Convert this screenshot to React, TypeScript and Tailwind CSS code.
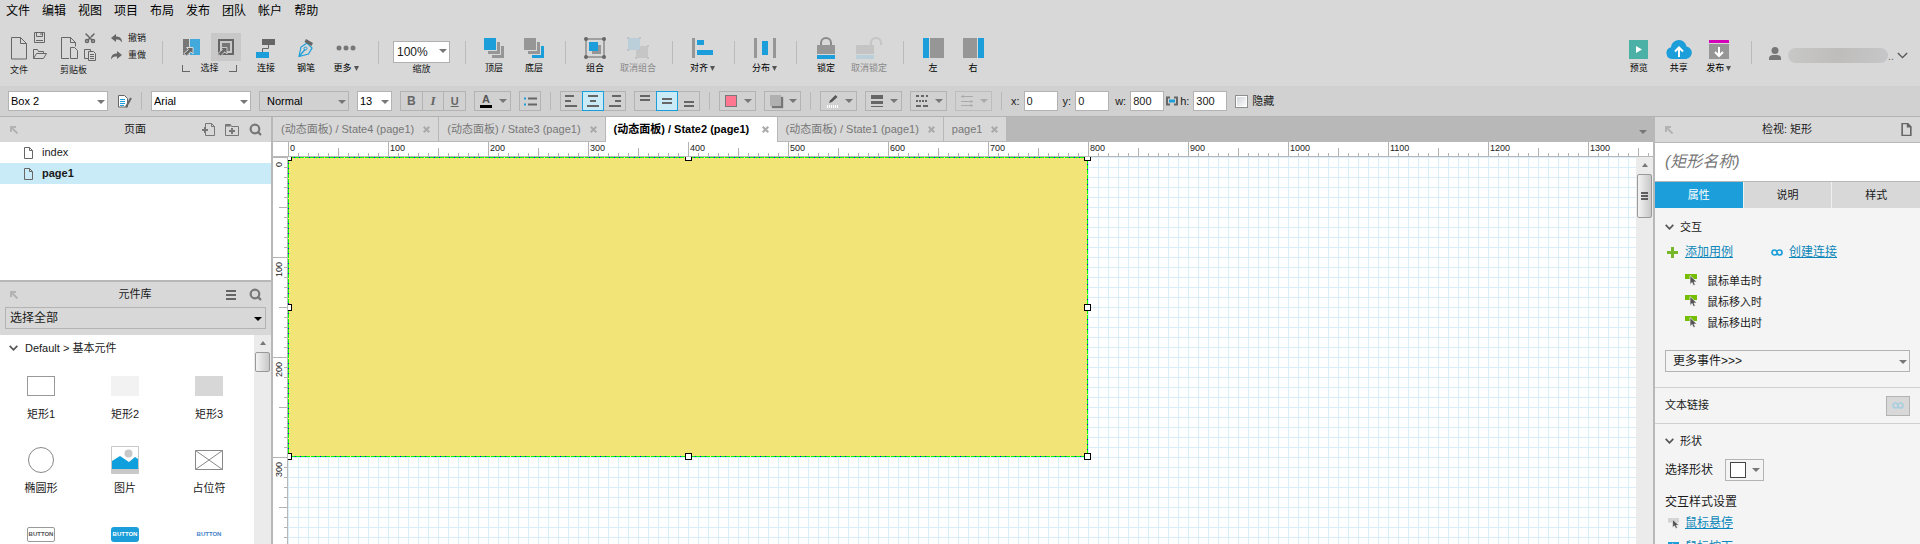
import { useLayoutEffect, useRef, useState } from "react";
import type { ReactNode } from "react";
import { Scissors, Search } from "lucide-react";

const BLUE = "#1b9ed9";

function Caret({ className = "text-[#777]" }: { className?: string }) {
    return (
        <svg width="8" height="4" viewBox="0 0 8 4" className={`shrink-0 ${className}`}>
            <path d="M0 0h8L4 4z" fill="currentColor" />
        </svg>
    );
}

function Chevron({ width = 9 }: { width?: number }) {
    return (
        <svg width={width} height={width === 9 ? 6 : 7} viewBox="0 0 9 6" preserveAspectRatio="none" fill="none" stroke="#555" strokeWidth={width === 9 ? 1.7 : 1.1}>
            <path d="M.7.8l3.8 4L8.3.8" />
        </svg>
    );
}

function ToolSep({ className = "ml-[11px] mr-[9px]" }: { className?: string }) {
    return <div className={`mt-[19px] h-[23px] w-px shrink-0 bg-[#bbb] ${className}`} />;
}

function ToolItem({ label, children, width = "w-10", caret, disabled }: {
    label: string;
    children: ReactNode;
    width?: string;
    caret?: boolean;
    disabled?: boolean;
}) {
    return (
        <button disabled={disabled} className={`mt-[15px] flex shrink-0 flex-col items-center ${width} ${disabled ? "text-[#888]" : "text-black"}`}>
            <span className="flex h-[22px] items-center justify-center">{children}</span>
            <span className="mt-[3px] flex h-3 items-center gap-[2px] whitespace-nowrap text-[9px] leading-3">
                {label}
                {caret && (
                    <svg width="5" height="5" viewBox="0 0 5 5"><path d="M0 0h5L2.5 5z" fill="#555" /></svg>
                )}
            </span>
        </button>
    );
}

function PageIcon({ className, stroke = "#666", sw = 1 }: { className: string; stroke?: string; sw?: number }) {
    return (
        <svg viewBox="0 0 9 12" className={className} fill="none" stroke={stroke} strokeWidth={sw}>
            <path d="M.5.5h5l3 3v8h-8zM5.5.5v3h3" />
        </svg>
    );
}

function Pointer({ halo }: { halo: string }) {
    return <path d="M3.500 9.500h6.500V16l-2.200-2.200L3.500 18 1 15.500l4.500-4z" fill="#666" stroke={halo} strokeWidth="1" />;
}

function Toolbar() {
    return (
        <div className="flex h-16 items-start bg-[#d8d8d8] pl-[10px]">
            <div className="mt-2 flex flex-col">
                <div className="flex h-8">
                    <button aria-label="新建" className="mt-[7px] h-[23px]">
                        <svg width="17" height="23" fill="none" stroke="#666"><path d="M1.500.5h9l6 6v15.500h-15zM10.500.5v6h6" /></svg>
                    </button>
                    <div className="ml-[6px] flex flex-col pt-[2px]">
                        <button aria-label="保存" className="flex h-[17px] items-start">
                            <svg width="13" height="12" fill="none" stroke="#666"><path d="M1.500.5h10v10h-10zM3.500.5v4h6v-4M3 8.500h7M8 1v2" /></svg>
                        </button>
                        <button aria-label="打开" className="flex h-3 items-start">
                            <svg width="14" height="11" fill="none" stroke="#666"><path d="M.5 9.500v-9h4l1 2h5v2M.5 9.500l3-5h10l-3 5z" /></svg>
                        </button>
                    </div>
                </div>
                <span className="mt-[2px] text-[9px] leading-3">文件</span>
            </div>
            <div className="ml-[13px] mt-2 flex flex-col">
                <div className="flex h-8">
                    <button aria-label="粘贴" className="mt-[7px] h-[23px]">
                        <svg width="19" height="23" fill="none" stroke="#666"><path d="M9 21.500H1.500V.5h9l5 5v4M10.500.5v5h5" /><path d="M10.500 10.500h4l3 3v8h-7z" fill="#d8d8d8" /></svg>
                    </button>
                    <div className="ml-[5px] flex flex-col pt-[2px]">
                        <button aria-label="剪切" className="flex h-[17px] items-start"><Scissors size={12} color="#666" strokeWidth={3} className="-rotate-90" /></button>
                        <button aria-label="复制" className="flex h-3 items-start">
                            <svg width="13" height="12" fill="none" stroke="#666"><path d="M4 9.500H.5v-9h6v2" /><path d="M4.500 2.500h5l2 2v7h-7zM6 5.500h4M6 7.500h4M6 9.500h4" /></svg>
                        </button>
                    </div>
                </div>
                <span className="mt-[2px] text-[9px] leading-3">剪贴板</span>
            </div>
            <div className="ml-[14px] mt-[10px] flex flex-col gap-[5px] text-[9px] leading-3">
                <button className="flex items-center gap-[6px]">
                    <svg width="11" height="9"><path d="M0 4l5-4v2.500c4 0 6 2 6 6C9.500 6 8 5.500 5 5.500V8z" fill="#666" /></svg>撤销
                </button>
                <button className="flex items-center gap-[6px]">
                    <svg width="11" height="9"><path d="M11 4L6 0v2.500C2 2.500 0 4.500 0 8.500 1.500 6 3 5.500 6 5.500V8z" fill="#666" /></svg>重做
                </button>
            </div>
            <ToolSep className="ml-4 mr-[19px]" />
            <div className="mt-[11px] w-[59px]">
                <div className="flex h-7 items-center justify-between">
                    <button aria-label="相交选择" className="pl-px">
                        <svg width="17" height="18"><path d="M0 1h6v16H0z" fill="#777" /><path d="M7 1h10v16H7z" fill="#42a9dc" /><Pointer halo="#d8d8d8" /></svg>
                    </button>
                    <button aria-label="包含选择" className="flex h-7 w-[30px] items-center justify-center bg-[#c8c8c8]">
                        <svg width="18" height="18"><path d="M2 2h14v14H2z" fill="none" stroke="#666" strokeWidth="2" /><path d="M5 5h8v8H5z" fill="#777" /><Pointer halo="#c8c8c8" /></svg>
                    </button>
                </div>
                <div className="flex h-3 justify-between pr-1 text-[9px] leading-3">
                    <span className="mt-[4px] h-[7px] w-2 border-b border-l border-[#666]" />
                    <span className="mt-px">选择</span>
                    <span className="mt-[4px] h-[7px] w-2 border-b border-r border-[#666]" />
                </div>
            </div>
            <div className="w-[5px] shrink-0" />
            <ToolItem label="连接">
                <svg width="20" height="20"><path d="M6 1h13v6H6z" fill="#666" /><path d="M0 14h13v6H0z" fill={BLUE} /><path d="M12.500 7v3.500h-6V14" fill="none" stroke="#666" /></svg>
            </ToolItem>
            <ToolItem label="钢笔">
                <svg width="16" height="20"><path d="M1 18.500L3 9l6-4 5 5-3.500 6zM1 18.500l6-7" fill="none" stroke={BLUE} strokeWidth="1.200" /><circle cx="7.500" cy="10.500" r="1.500" fill="none" stroke={BLUE} /><path d="M8 1l7 4-1.500 3L6.500 4z" fill="#666" /></svg>
            </ToolItem>
            <ToolItem label="更多" caret>
                <svg width="20" height="6" fill="#777"><circle cx="3" cy="3" r="2.500" /><circle cx="10" cy="3" r="2.500" /><circle cx="17" cy="3" r="2.500" /></svg>
            </ToolItem>
            <ToolSep className="ml-3 mr-[14px]" />
            <div className="mt-[17px] flex flex-col items-center">
                <div className="relative">
                    <select id="zoom" className="h-[22px] w-[57px] appearance-none border border-[#b0b0b0] bg-white pl-[3px] text-[12px]">
                        <option>100%</option>
                    </select>
                    <Caret className="pointer-events-none absolute right-[3px] top-[10px] text-[#777]" />
                </div>
                <label htmlFor="zoom" className="text-[9px] leading-3">缩放</label>
            </div>
            <ToolSep className="ml-[15px] mr-2" />
            <ToolItem label="顶层">
                <svg width="20" height="20"><path d="M8 8h12v12H8z" fill="#969696" /><path d="M4 4h13v13H4z" fill="#d8d8d8" /><path d="M4 4h12v12H4z" fill="#969696" /><path d="M0 0h13v13H0z" fill="#d8d8d8" /><path d="M0 0h12v12H0z" fill={BLUE} /></svg>
            </ToolItem>
            <ToolItem label="底层">
                <svg width="20" height="20"><path d="M8 8h12v12H8z" fill={BLUE} /><path d="M4 4h13v13H4z" fill="#d8d8d8" /><path d="M4 4h12v12H4z" fill="#969696" /><path d="M0 0h13v13H0z" fill="#d8d8d8" /><path d="M0 0h12v12H0z" fill="#969696" /></svg>
            </ToolItem>
            <ToolSep />
            <ToolItem label="组合">
                <svg width="22" height="22"><path d="M2 2h18v18H2z" fill="none" stroke="#666" /><path d="M8 8h9v9H8z" fill="#969696" /><path d="M5 5h9v9H5z" fill={BLUE} /><g fill="#666"><circle cx="2" cy="2" r="2" /><circle cx="20" cy="2" r="2" /><circle cx="2" cy="20" r="2" /><circle cx="20" cy="20" r="2" /></g></svg>
            </ToolItem>
            <ToolItem label="取消组合" width="w-[46px]" disabled>
                <svg width="22" height="22"><path d="M9 9h12v12H9z" fill="#c6c6c6" /><path d="M1 1h12v12H1z" fill="#bbcfdb" /><g fill="#c2c2c2"><path d="M0 0h2v2H0zM12 0h2v2h-2zM0 12h2v2H0zM12 12h2v2h-2zM20 8h2v2h-2zM8 20h2v2H8zM20 20h2v2h-2z" /></g></svg>
            </ToolItem>
            <ToolSep />
            <ToolItem label="对齐" width="w-[41px]" caret>
                <svg width="22" height="21"><path d="M0 0h3v20H0z" fill="#969696" /><path d="M5 2h7v5H5zM5 12h16v5H5z" fill={BLUE} /></svg>
            </ToolItem>
            <ToolSep />
            <ToolItem label="分布" width="w-[41px]" caret>
                <svg width="22" height="20"><path d="M0 0h3v20H0zM19 0h3v20h-3z" fill="#969696" /><path d="M8 3h6v14H8z" fill={BLUE} /></svg>
            </ToolItem>
            <ToolSep />
            <ToolItem label="锁定">
                <svg width="18" height="22"><path d="M4 9V6a5 5 0 0110 0v3" fill="none" stroke="#8a8a8a" strokeWidth="2" /><path d="M0 8h18v9H0z" fill="#969696" /><path d="M0 18h18v4H0z" fill={BLUE} /></svg>
            </ToolItem>
            <ToolItem label="取消锁定" width="w-[46px]" disabled>
                <svg width="26" height="22"><path d="M15 9V6a5 5 0 0110 0v2" fill="none" stroke="#c4c4c4" strokeWidth="2" /><path d="M0 8h18v9H0z" fill="#c4c4c4" /><path d="M0 18h18v4H0z" fill="#bbcfdb" /></svg>
            </ToolItem>
            <ToolSep />
            <ToolItem label="左">
                <svg width="21" height="20"><path d="M0 0h6v20H0z" fill={BLUE} /><path d="M7 0h14v20H7z" fill="#969696" /></svg>
            </ToolItem>
            <ToolItem label="右">
                <svg width="21" height="20"><path d="M15 0h6v20h-6z" fill={BLUE} /><path d="M0 0h14v20H0z" fill="#969696" /></svg>
            </ToolItem>
            <div className="ml-auto flex items-start pr-3">
                <ToolItem label="预览">
                    <svg width="19" height="19" className="mt-[3px]"><path d="M0 0h19v19H0z" fill="#4bb0a6" /><path d="M7 6v7l6-3.500z" fill="#fff" /></svg>
                </ToolItem>
                <ToolItem label="共享">
                    <svg width="26" height="19" className="mt-[3px]"><path d="M6 19a6 6 0 01-1-11.800C5.500 3 9 0 13 0s7 3 7.500 6.500A6.300 6.300 0 0120 19z" fill={BLUE} /><path d="M13 17V8M9 11.500l4-4 4 4" fill="none" stroke="#fff" strokeWidth="2" /></svg>
                </ToolItem>
                <ToolItem label="发布" caret>
                    <svg width="20" height="19" className="mt-[3px]"><path d="M0 0h20v3H0z" fill="#d400b8" /><path d="M0 4h20v15H0z" fill="#969696" /><path d="M10 7v9M6 12l4 4 4-4" fill="none" stroke="#fff" strokeWidth="2" /></svg>
                </ToolItem>
                <ToolSep className="ml-3 mr-[17px]" />
                <button aria-label="用户" className="mt-[22px] flex items-center">
                    <svg width="12" height="13" fill="#777"><circle cx="6" cy="3.500" r="3.500" /><path d="M0 13v-2c0-2 2-3 4-3h4c2 0 4 1 4 3v2z" /></svg>
                    <span className="ml-[7px] mt-1 h-[15px] w-[100px] rounded-full bg-gradient-to-r from-[#c8c8c8] via-[#bebdbb] to-[#c6c6c8]" />
                    <span className="mr-[3px] mt-1 text-[11px] leading-3 text-[#666]">..</span>
                    <span className="mt-1"><Chevron width={11} /></span>
                </button>
            </div>
        </div>
    );
}

function Pick({ label, value, width, bg = "bg-white", pad = "pl-[2px]" }: { label: string; value: string; width: string; bg?: string; pad?: string }) {
    return (
        <div className={`relative h-5 shrink-0 ${width}`}>
            <select aria-label={label} className={`block h-5 w-full appearance-none border border-[#b3b3b3] text-[11px] leading-[18px] text-black ${bg} ${pad}`}>
                <option>{value}</option>
            </select>
            <Caret className="pointer-events-none absolute right-[3px] top-[9px] text-[#777]" />
        </div>
    );
}

function Sep() {
    return <div className="mx-px h-[18px] w-px shrink-0 bg-[#b8b8b8]" />;
}

function DropButton({ label, children, disabled }: { label: string; children: ReactNode; disabled?: boolean }) {
    return (
        <button aria-label={label} disabled={disabled} className={`flex h-5 w-[37px] shrink-0 items-center justify-between border pl-[5px] pr-[3px] ${disabled ? "border-[#bdbdbd]" : "border-[#b3b3b3]"}`}>
            {children}
            <Caret className={disabled ? "text-[#aaa]" : "text-[#777]"} />
        </button>
    );
}

function Group({ items, active }: { items: { label: string; icon: ReactNode }[]; active?: number }) {
    return (
        <div className="flex h-5 w-[66px] shrink-0 border border-[#b3b3b3]">
            {items.map((item, i) => (
                <button
                    key={item.label}
                    aria-label={item.label}
                    className={`flex flex-1 items-center justify-center text-[#666] ${i === active ? "-my-px h-5 border border-[#1b9ed9] bg-[#c9eaf7]" : "h-[18px]"} ${active === undefined && i > 0 ? "border-l border-[#b3b3b3]" : ""}`}
                >
                    {item.icon}
                </button>
            ))}
        </div>
    );
}

function Bars({ d }: { d: string }) {
    return <svg width="12" height="12"><path d={d} stroke="#666" strokeWidth="2" /></svg>;
}

function NumberField({ id, value, className = "" }: { id: string; value: string; className?: string }) {
    return (
        <div className={`flex items-center ${className}`}>
            <label htmlFor={id} className="text-[11px]">{id}:</label>
            <input id={id} defaultValue={value} className="ml-1 h-5 w-[34px] border border-[#b3b3b3] bg-white pl-[2px] text-[11px]" />
        </div>
    );
}

function StyleBar() {
    return (
        <div className="flex h-[31px] shrink-0 items-center gap-2 border-b border-[#b3b3b3] bg-[#d1d1d1] pl-2">
            <Pick label="部件样式" value="Box 2" width="w-[100px]" />
            <button aria-label="编辑样式" className="ml-[2px]">
                <svg width="14" height="13"><path d="M.5.500h6l3 3v8.500H.5z" fill="#fff" stroke="#666" /><path d="M2 4.500h5M2 6.500h5M2 8.500h5M2 10.500h4" stroke={BLUE} /><path d="M13 3L8 12" stroke="#666" strokeWidth="2" /></svg>
            </button>
            <Sep />
            <Pick label="字体" value="Arial" width="w-[100px]" />
            <Pick label="字型" value="Normal" width="w-[90px]" bg="bg-[#d1d1d1]" pad="pl-[7px]" />
            <Pick label="字号" value="13" width="w-[35px]" />
            <Group items={[
                { label: "粗体", icon: <b className="text-[12px]">B</b> },
                { label: "斜体", icon: <b className="font-['Liberation_Serif',serif] text-[13px] italic">I</b> },
                { label: "下划线", icon: <b className="text-[11px] underline">U</b> },
            ]} />
            <DropButton label="文字颜色">
                <span className="flex h-[14px] w-3 items-center justify-center border-b-[3px] border-black text-[11px] font-bold leading-[11px] text-[#555]">A</span>
            </DropButton>
            <button aria-label="列表" className="flex h-5 w-[22px] items-center justify-center border border-[#b3b3b3]">
                <svg width="13" height="9"><path d="M0 1.500h2M0 7.500h2" stroke={BLUE} strokeWidth="2" /><path d="M4 1.500h9M4 7.500h9" stroke="#666" strokeWidth="2" /></svg>
            </button>
            <Sep />
            <Group active={1} items={[
                { label: "左对齐", icon: <Bars d="M0 1h9M0 6h6M0 11h12" /> },
                { label: "居中", icon: <Bars d="M1 1h10M3 6h6M0 11h12" /> },
                { label: "右对齐", icon: <Bars d="M3 1h9M6 6h6M0 11h12" /> },
            ]} />
            <Group active={1} items={[
                { label: "顶部", icon: <Bars d="M1 1h10M1 5h10" /> },
                { label: "中部", icon: <Bars d="M1 4h10M1 8h10" /> },
                { label: "底部", icon: <Bars d="M1 7h10M1 11h10" /> },
            ]} />
            <Sep />
            <DropButton label="填充颜色"><span className="h-3 w-3 border border-[#777] bg-[#ff7691]" /></DropButton>
            <DropButton label="阴影"><span className="mb-[2px] h-[11px] w-[11px] bg-[#b0b0b0] shadow-[2px_2px_1px_#777]" /></DropButton>
            <Sep />
            <DropButton label="线条颜色">
                <svg width="14" height="14" className="ml-px"><path d="M2 9l1-2.500L8.500 1l2 2L5 8z" fill="#555" /><path d="M0 12.500h12" stroke="#fff" strokeWidth="3" strokeDasharray="1 1" /></svg>
            </DropButton>
            <DropButton label="线宽">
                <svg width="12" height="12" stroke="#666"><path d="M0 2h12" strokeWidth="4" /><path d="M0 7.500h12" strokeWidth="3" /><path d="M0 11.500h12" /></svg>
            </DropButton>
            <DropButton label="线型">
                <svg width="12" height="12" stroke="#666" strokeWidth="2"><path d="M0 1h12" strokeDasharray="3 2" /><path d="M0 6h12" strokeDasharray="2 1" /><path d="M0 11h12" strokeDasharray="5 2" /></svg>
            </DropButton>
            <DropButton label="箭头" disabled>
                <svg width="12" height="12" stroke="#aaa"><path d="M0 1.500h12M0 6.500h12M0 10.500h12M2 0v3M10 5v3M10 9v3" /></svg>
            </DropButton>
            <Sep />
            <NumberField id="x" value="0" />
            <NumberField id="y" value="0" className="-ml-[3px]" />
            <NumberField id="w" value="800" className="-ml-[2px]" />
            <div className="-ml-[6px] flex items-center gap-[2px]">
                <svg width="12" height="10" fill="none"><path d="M4 1.500H1v7h3M8 1.500h3v7H8" stroke="#666" strokeWidth="2" /><path d="M3 5h6" stroke={BLUE} strokeWidth="3" /></svg>
                <NumberField id="h" value="300" />
            </div>
            <label className="flex items-center gap-1 text-[11px]">
                <input type="checkbox" className="h-[13px] w-[13px] appearance-none border border-[#8e8f8f] bg-gradient-to-br from-[#cfd3d8] to-white outline-1 -outline-offset-2 outline-white" />
                隐藏
            </label>
        </div>
    );
}

function CollapseIcon() {
    return <svg width="8" height="8" fill="none" stroke="#b3b3b3" strokeWidth="2"><path d="M1 6V1h5M1 1l6.500 6.500" /></svg>;
}

function LibIcon({ kind }: { kind: string }) {
    switch (kind) {
        case "rect1": return <span className="h-5 w-7 border border-[#999] bg-white" />;
        case "rect2": return <span className="h-5 w-7 bg-[#f2f2f2]" />;
        case "rect3": return <span className="h-5 w-7 bg-[#d7d7d7]" />;
        case "ellipse": return <span className="h-[26px] w-[26px] rounded-full border border-[#888]" />;
        case "image": return (
            <svg width="28" height="28"><path d="M.5.500h27v27H.5z" fill="#fff" stroke="#c8c8c8" /><path d="M1 23h26v4H1z" fill="#c8c8c8" /><circle cx="17.500" cy="7.500" r="4" fill="#c8c8c8" /><path d="M1 15l8-5 9 6 6-5 3 2v10H1z" fill="#0f9fdc" /></svg>
        );
        case "placeholder": return (
            <svg width="28" height="20" fill="none" stroke="#888"><path d="M.5.500h27v19H.5zM.5.500l27 19M27.500.500l-27 19" /></svg>
        );
        case "button1": return <span className="flex h-[15px] w-7 items-center justify-center rounded-[2px] border border-[#999] text-[6px] font-bold leading-[8px] text-[#555]">BUTTON</span>;
        case "button2": return <span className="flex h-[15px] w-7 items-center justify-center rounded-[3px] bg-[#1b9ed9] text-[6px] font-bold leading-[8px] text-white">BUTTON</span>;
        default: return <span className="text-[6px] font-bold leading-[8px] text-[#4584c8]">BUTTON</span>;
    }
}

const widgets = [
    { kind: "rect1", label: "矩形1" },
    { kind: "rect2", label: "矩形2" },
    { kind: "rect3", label: "矩形3" },
    { kind: "ellipse", label: "椭圆形" },
    { kind: "image", label: "图片" },
    { kind: "placeholder", label: "占位符" },
    { kind: "button1", label: "" },
    { kind: "button2", label: "" },
    { kind: "link", label: "" },
];

function LeftPanel() {
    return (
        <aside className="flex w-[273px] shrink-0 flex-col overflow-hidden border-r-2 border-[#b8b8b8] bg-white">
            <div className="flex h-[25px] shrink-0 items-center bg-[#d8d8d8] pl-[10px] pr-[9px]">
                <span className="w-[72px]"><CollapseIcon /></span>
                <h2 className="flex-1 text-center text-[11px]">页面</h2>
                <div className="flex w-[74px] items-center justify-end gap-[10px]">
                    <button aria-label="添加页面">
                        <svg width="13" height="13" fill="none" stroke="#777"><path d="M3.500 4V.5h6l3 3v9h-9V10M9.500.5v3h3" /><path d="M0 7h6M3 4v6" strokeWidth="2" /></svg>
                    </button>
                    <button aria-label="添加文件夹">
                        <svg width="14" height="12" fill="none" stroke="#777"><path d="M.5 11.500V.5h5l1 2h7v9z" /><path d="M.5 1.500h5" strokeWidth="2" /><path d="M4 7h6M7 4v6" strokeWidth="2" /></svg>
                    </button>
                    <button aria-label="搜索页面"><Search size={13} color="#777" strokeWidth={4} /></button>
                </div>
            </div>
            <ul className="h-[138px] shrink-0 text-[11px]">
                <li>
                    <button className="flex h-[21px] w-full items-center gap-[9px] pl-6"><PageIcon className="h-3 w-[9px]" />index</button>
                </li>
                <li>
                    <button className="flex h-[21px] w-full items-center gap-[9px] bg-[#c9eaf7] pl-6 font-bold"><PageIcon className="h-3 w-[9px]" />page1</button>
                </li>
            </ul>
            <div className="shrink-0 border-t-2 border-[#b8b8b8] bg-[#d8d8d8] pb-[6px]">
                <div className="flex h-[25px] items-center pl-[10px] pr-[9px]">
                    <span className="w-[72px]"><CollapseIcon /></span>
                    <h2 className="flex-1 text-center text-[11px]">元件库</h2>
                    <div className="flex w-[74px] items-center justify-end gap-[13px]">
                        <button aria-label="菜单"><svg width="10" height="10"><path d="M0 1h10M0 5h10M0 9h10" stroke="#666" strokeWidth="2" /></svg></button>
                        <button aria-label="搜索元件"><Search size={13} color="#777" strokeWidth={4} /></button>
                    </div>
                </div>
                <div className="relative mx-[5px]">
                    <select aria-label="元件库" className="block h-[22px] w-full appearance-none border border-[#b3b3b3] pl-1 text-[12px]">
                        <option>选择全部</option>
                    </select>
                    <Caret className="pointer-events-none absolute right-1 top-[10px] text-black" />
                </div>
            </div>
            <div className="flex min-h-0 flex-1">
                <div className="flex-1 overflow-hidden">
                    <button className="flex h-[26px] items-center gap-[7px] pl-[9px] text-[11px]"><Chevron />Default &gt; 基本元件</button>
                    <div className="mt-[11px] grid grid-cols-[repeat(3,84px)]">
                        {widgets.map((w) => (
                            <button key={w.kind} aria-label={w.label || w.kind} className="flex h-[74px] w-[82px] flex-col items-center">
                                <span className="flex h-7 items-center">
                                    <LibIcon kind={w.kind} />
                                </span>
                                <span className="mt-[7px] text-[11px] leading-[14px]">{w.label}</span>
                            </button>
                        ))}
                    </div>
                </div>
                <div className="flex w-[17px] shrink-0 flex-col items-center bg-[#ebebeb]">
                    <svg width="6" height="4" className="mt-[6px] shrink-0"><path d="M0 4h6L3 0z" fill="#777" /></svg>
                    <div className="mt-[7px] h-5 w-[15px] rounded-[2px] border border-[#999] bg-gradient-to-r from-[#f3f3f3] to-[#c8c8c8]" />
                </div>
            </div>
        </aside>
    );
}

const tabs = [
    { title: "(动态面板) / State4 (page1)" },
    { title: "(动态面板) / State3 (page1)" },
    { title: "(动态面板) / State2 (page1)", active: true },
    { title: "(动态面板) / State1 (page1)" },
    { title: "page1" },
];

function tickStart(v: number) {
    if (v % 100 === 0) return 0;
    return v % 50 === 0 ? 6 : 11;
}

function Ruler({ vertical }: { vertical?: boolean }) {
    const ref = useRef<SVGSVGElement>(null);
    const [length, setLength] = useState(0);

    useLayoutEffect(() => {
        const measure = () => {
            const box = ref.current?.getBoundingClientRect();
            if (box) setLength(vertical ? box.height : box.width);
        };
        measure();
        window.addEventListener("resize", measure);
        return () => window.removeEventListener("resize", measure);
    }, [vertical]);

    const ticks = Array.from({ length: Math.ceil(length / 10) }, (_, i) => i * 10);
    const labels = ticks.filter((v) => v % 100 === 0 && v + 24 < length);

    return (
        <svg ref={ref} className={vertical ? "h-full w-[15px] shrink-0 bg-white" : "h-[15px] min-w-0 flex-1"} shapeRendering="crispEdges">
            {ticks.map((v) => {
                const start = tickStart(v);
                return vertical
                    ? <rect key={v} x={start} y={v} width={15 - start} height="1" fill="#b3b3b3" />
                    : <rect key={v} x={v} y={start} width="1" height={15 - start} fill="#b3b3b3" />;
            })}
            {vertical
                ? <rect x="14" width="1" height="100%" fill="#b8b8b8" />
                : <rect y="14" width="100%" height="1" fill="#b8b8b8" />}
            {labels.map((v) => (
                <text
                    key={v}
                    transform={vertical ? `translate(9 ${v + 5}) rotate(-90)` : `translate(${v + 2} 9)`}
                    textAnchor={vertical ? "end" : "start"}
                    fontSize="9"
                    fill="#222"
                >
                    {v}
                </text>
            ))}
        </svg>
    );
}

const handles = [
    "left-[-3px] top-[-3px]",
    "left-[397px] top-[-3px]",
    "left-[796px] top-[-3px]",
    "left-[-3px] top-[147px]",
    "left-[796px] top-[147px]",
    "left-[-3px] top-[296px]",
    "left-[397px] top-[296px]",
    "left-[796px] top-[296px]",
];

function Workspace() {
    return (
        <main className="flex min-w-0 flex-1 flex-col">
            <div className="flex h-[25px] shrink-0 items-stretch bg-[#b8b8b8] text-[11px]">
                {tabs.map((t) => (
                    <div key={t.title} className={`flex shrink-0 items-center justify-between gap-[9px] border-r border-[#b8b8b8] px-2 ${t.active ? "min-w-[172px] bg-white font-bold text-black" : "border-b bg-[#d8d8d8] text-[#777]"}`}>
                        <button className="whitespace-nowrap">{t.title}</button>
                        <button aria-label="关闭">
                            <svg width="7" height="7"><path d="M.7.700l5.600 5.600M6.300.700L.7 6.300" stroke="#aaa" strokeWidth="2" /></svg>
                        </button>
                    </div>
                ))}
                <button aria-label="标签列表" className="ml-auto mr-[6px] mt-1"><Caret /></button>
            </div>
            <div className="flex h-[15px] shrink-0 bg-white">
                <div className="w-[15px] shrink-0 border-b border-[#b8b8b8]" />
                <Ruler />
            </div>
            <div className="flex min-h-0 flex-1">
                <Ruler vertical />
                <div className="relative min-w-0 flex-1 overflow-hidden bg-white bg-[linear-gradient(to_right,#d9eefb_1px,transparent_1px),linear-gradient(to_bottom,#d9eefb_1px,transparent_1px)] bg-[size:10px_10px]">
                    <div className="absolute left-0 top-0 h-[300px] w-[800px] bg-[#f2e476]">
                        <svg width="800" height="300" fill="none" shapeRendering="crispEdges">
                            <rect x=".5" y=".5" width="799" height="299" stroke="#00ff00" />
                            <rect x=".5" y=".5" width="799" height="299" stroke="#0000e0" strokeDasharray="1 4 1 4 1 9" />
                            <rect x=".5" y=".5" width="799" height="299" stroke="#f2e476" strokeDasharray="1 19" strokeDashoffset="-15" />
                        </svg>
                        {handles.map((pos) => (
                            <span key={pos} className={`absolute h-[7px] w-[7px] border border-black bg-white ${pos}`} />
                        ))}
                    </div>
                </div>
                <div className="flex w-[17px] shrink-0 flex-col items-center bg-[#ebebeb]">
                    <svg width="6" height="4" className="mt-[6px] shrink-0"><path d="M0 4h6L3 0z" fill="#777" /></svg>
                    <div className="mt-[7px] flex h-11 w-[15px] items-center justify-center rounded-[2px] border border-[#999] bg-gradient-to-r from-[#f3f3f3] to-[#c8c8c8]">
                        <svg width="7" height="8"><path d="M0 1h7M0 4h7M0 7h7" stroke="#333" strokeWidth="1.500" /></svg>
                    </div>
                </div>
            </div>
        </main>
    );
}

function MouseIcon({ fill, className }: { fill: string; className: string }) {
    return (
        <svg viewBox="0 0 12 12" className={`shrink-0 ${className}`}>
            <path d="M0 0h12v5H0z" fill={fill} />
            <path d="M5 1.500v9l2-2 1.500 3 1.800-.8L9 8h3z" fill="#555" stroke="#f4f4f4" strokeWidth=".7" />
        </svg>
    );
}

function ChainIcon({ stroke, className = "" }: { stroke: string; className?: string }) {
    return (
        <svg width="12" height="7" className={className} fill="none" stroke={stroke} strokeWidth="1.700">
            <path d="M6 4.800C5.500 5.700 4.600 6 3.500 6a2.500 2.500 0 010-5C5 1 5.700 1.800 6 3.500S7 6 8.500 6a2.500 2.500 0 000-5C7.400 1 6.500 1.300 6 2.200" />
        </svg>
    );
}

function Inspector() {
    return (
        <aside className="flex w-[267px] shrink-0 flex-col overflow-hidden border-l-2 border-[#b8b8b8] bg-[#f4f4f4] text-[11px]">
            <div className="flex h-[26px] shrink-0 items-center justify-between border-b border-[#b8b8b8] bg-[#d8d8d8] pl-[10px] pr-2">
                <CollapseIcon />
                <h2>检视: 矩形</h2>
                <PageIcon className="h-[13px] w-[11px]" sw={1.5} />
            </div>
            <input aria-label="矩形名称" placeholder="(矩形名称)" className="h-[39px] w-full shrink-0 border-b border-[#b8b8b8] bg-white px-[10px] text-[16px] italic placeholder:text-[#777]" />
            <div className="grid h-[26px] shrink-0 grid-cols-3 gap-px bg-[#f0f0f0]">
                <button className="bg-[#1b9ed9] text-white">属性</button>
                <button className="bg-[#d8d8d8]">说明</button>
                <button className="bg-[#d8d8d8]">样式</button>
            </div>
            <div className="shrink-0 border-b border-[#d0d0d0] px-[10px] pb-[15px] pt-[11px]">
                <button className="flex h-4 items-center gap-[6px]"><Chevron />交互</button>
                <div className="mt-2 flex h-[18px] items-center text-[12px] text-[#0d87b9]">
                    <svg width="11" height="11" className="ml-[2px]"><path d="M5.500 0v11M0 5.500h11" stroke="#76b82a" strokeWidth="3" /></svg>
                    <a href="#" className="ml-[7px] underline">添加用例</a>
                    <ChainIcon stroke={BLUE} className="ml-[38px]" />
                    <a href="#" className="ml-[6px] underline">创建连接</a>
                </div>
                <ul className="mt-[10px] pl-5">
                    {["鼠标单击时", "鼠标移入时", "鼠标移出时"].map((name) => (
                        <li key={name} className="flex h-[21px] items-center gap-[10px]"><MouseIcon fill="#76be00" className="mb-[3px] h-3 w-3" />{name}</li>
                    ))}
                </ul>
                <div className="relative mt-4">
                    <select aria-label="更多事件" className="block h-[22px] w-full appearance-none border border-[#b3b3b3] pl-[7px] text-[12px]">
                        <option>更多事件&gt;&gt;&gt;</option>
                    </select>
                    <Caret className="pointer-events-none absolute right-[3px] top-[10px] text-[#777]" />
                </div>
            </div>
            <div className="flex h-9 shrink-0 items-center justify-between border-b border-[#d0d0d0] px-[10px]">
                <span>文本链接</span>
                <button aria-label="添加文本链接" disabled className="flex h-5 w-6 items-center justify-center border border-[#b3b3b3] bg-[#d8d8d8]">
                    <ChainIcon stroke="#a9cfe0" />
                </button>
            </div>
            <div className="px-[10px] pt-[9px] text-[12px]">
                <button className="flex h-4 items-center gap-[6px] text-[11px]"><Chevron />形状</button>
                <div className="mt-[10px] flex h-[22px] items-center gap-3">
                    <span>选择形状</span>
                    <button aria-label="选择形状" className="flex h-[22px] w-[39px] items-center justify-between border border-[#b3b3b3] pl-1 pr-[3px]">
                        <span className="h-4 w-4 border border-[#444] bg-white" />
                        <Caret />
                    </button>
                </div>
                <p className="mt-3 leading-[18px]">交互样式设置</p>
                <div className="mt-px flex h-[22px] items-center gap-[6px] pl-[3px]">
                    <MouseIcon fill="#d4d4d4" className="h-[11px] w-[11px]" />
                    <a href="#" className="text-[#0d87b9] underline">鼠标悬停</a>
                </div>
                <div className="mt-[2px] flex h-[22px] items-center gap-[6px] pl-[3px]">
                    <MouseIcon fill={BLUE} className="h-[11px] w-[11px]" />
                    <a href="#" className="text-[#0d87b9] underline">鼠标按下</a>
                </div>
            </div>
        </aside>
    );
}

export default function App() {
    return (
        <div className="flex h-screen flex-col overflow-hidden bg-[#d8d8d8] font-['Liberation_Sans','Noto_Sans_CJK_SC',sans-serif] text-[#1a1a1a]">
            <nav className="flex h-[22px] shrink-0 items-center gap-3 bg-[#d8d8d8] pl-[6px] text-[12px] text-black">
                {["文件", "编辑", "视图", "项目", "布局", "发布", "团队", "帐户", "帮助"].map((m) => (
                    <button key={m}>{m}</button>
                ))}
            </nav>
            <Toolbar />
            <StyleBar />
            <div className="flex min-h-0 flex-1">
                <LeftPanel />
                <Workspace />
                <Inspector />
            </div>
        </div>
    );
}
